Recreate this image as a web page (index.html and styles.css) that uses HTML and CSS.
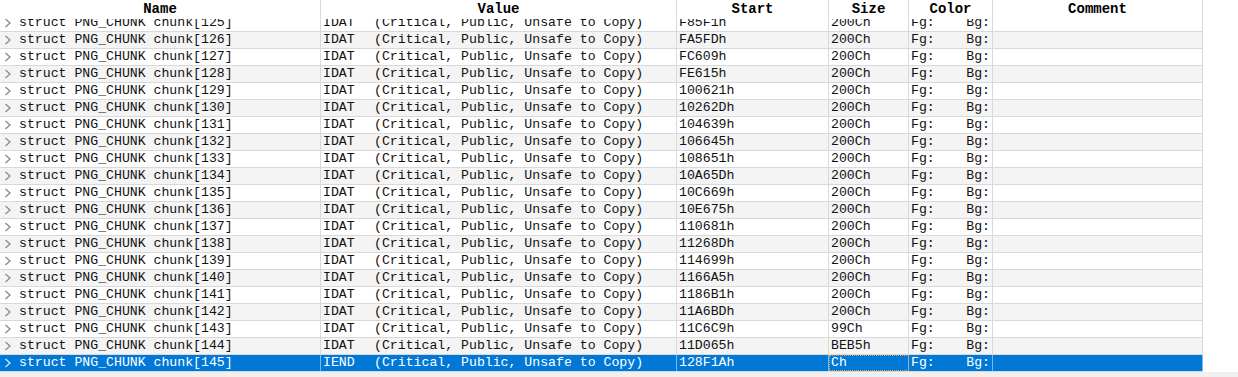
FILE: index.html
```html
<!DOCTYPE html>
<html lang="en">
<head>
    <meta charset="UTF-8">
    <title>Template Results</title>
    <link rel="stylesheet" href="styles.css">
</head>
<body>
    <div class="results">
        <div class="row head">
            <div class="cell">Name</div>
            <div class="cell">Value</div>
            <div class="cell">Start</div>
            <div class="cell">Size</div>
            <div class="cell">Color</div>
            <div class="cell">Comment</div>
        </div>
        <div class="viewport">
            <div class="rows" id="rows"></div>
        </div>
        <div class="hscroll"></div>
    </div>

    <script>
        const starts = ["F85F1h", "FA5FDh", "FC609h", "FE615h", "100621h", "10262Dh", "104639h",
            "106645h", "108651h", "10A65Dh", "10C669h", "10E675h", "110681h", "11268Dh",
            "114699h", "1166A5h", "1186B1h", "11A6BDh", "11C6C9h", "11D065h", "128F1Ah"];

        const chevron = '<svg class="chev" width="8" height="10" viewBox="0 0 8 10">' +
            '<polyline points="1.5,1 6,5 1.5,9" fill="none" stroke="currentColor" stroke-width="1.3"/></svg>';

        const list = document.getElementById('rows');
        starts.forEach((start, i) => {
            const n = 125 + i;
            let size = "200Ch";
            if (n === 143) size = "99Ch";
            if (n === 144) size = "BEB5h";
            if (n === 145) size = "Ch";
            const type = n === 145 ? "IEND" : "IDAT";

            const row = document.createElement('div');
            row.className = "row" + (n % 2 === 0 ? " alt" : "") + (n === 145 ? " selected" : "");
            row.innerHTML =
                `<div class="cell name">${chevron}<span>struct PNG_CHUNK chunk[${n}]</span></div>` +
                `<div class="cell"><span class="type">${type}</span>(Critical, Public, Unsafe to Copy)</div>` +
                `<div class="cell">${start}</div>` +
                `<div class="cell${n === 145 ? " focus" : ""}">${size}</div>` +
                `<div class="cell color"><span>Fg:</span><span>Bg:</span></div>` +
                `<div class="cell"></div>`;
            list.appendChild(row);
        });
    </script>
</body>
</html>
```

FILE: styles.css
```css
body {
    margin: 0;
    background-color: white;
    font-family: "Liberation Mono", "DejaVu Sans Mono", monospace;
    font-size: 13.2px;
    color: #111;
}
.results {
    width: 1238px;
    height: 377px;
    overflow: hidden;
}
.row {
    display: grid;
    grid-template-columns: 321px 356px 152px 80px 84px 210px;
    height: 16px;
    line-height: 16px;
    border-bottom: 1px solid #d9d9d9;
    background-color: white;
    width: 1203px;
}
.row.alt {
    background-color: #f4f4f4;
}
.cell {
    border-right: 1px solid #d9d9d9;
    padding-left: 2px;
    white-space: pre;
    overflow: hidden;
}
.type {
    display: inline-block;
    width: 51px;
}
.head {
    height: 19px;
    line-height: 19px;
    border-bottom: none;
    font-size: 14px;
    font-weight: bold;
    color: #000;
}
.head .cell {
    text-align: center;
    padding-left: 0;
}
.viewport {
    height: 353px;
    overflow: hidden;
}
.rows {
    margin-top: -4px;
}
.name {
    display: flex;
    align-items: center;
    padding-left: 4px;
}
.chev {
    color: #8a8a8a;
    margin-right: 7px;
    flex-shrink: 0;
}
.color {
    display: flex;
    justify-content: space-between;
    padding-right: 2px;
}
.row.selected {
    background-color: #0078d7;
    color: white;
}
.row.selected .cell {
    border-right-color: #7fb6e6;
}
.row.selected .chev {
    color: #d6e8f8;
}
.focus {
    outline: 1px dotted #f0a040;
    outline-offset: -1px;
}
.hscroll {
    height: 5px;
    background-color: #f0f0f0;
}
```
